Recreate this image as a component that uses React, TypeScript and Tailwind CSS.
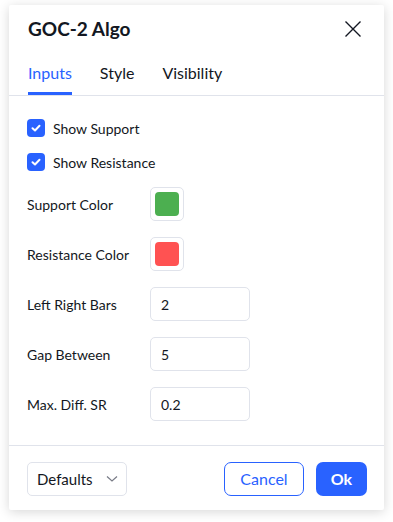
import React, { useState } from 'react';

const FONT = { fontFamily: 'Lato, "Noto Sans", sans-serif' };

const Checkbox = ({ checked, label, onToggle }: { checked: boolean; label: string; onToggle: () => void }) => (
    <label className="h-[34px] flex items-center gap-[8px] cursor-pointer" onClick={onToggle}>
        <span className={`w-[18px] h-[18px] rounded-[4px] flex items-center justify-center ${checked ? 'bg-[#2962ff]' : 'border border-[#b2b5be] bg-white'}`}>
            {checked && (
                <svg width="12" height="12" viewBox="0 0 12 12" fill="none">
                    <path d="M2.5 6.2 L5 8.5 L9.5 3.8" stroke="white" strokeWidth="2" strokeLinecap="round" strokeLinejoin="round" />
                </svg>
            )}
        </span>
        <span className="text-[14px] text-[#131722]">{label}</span>
    </label>
);

const Row = ({ label, children }: any) => (
    <div className="h-[34px] flex items-center">
        <div className="w-[123px] text-[14px] text-[#131722]">{label}</div>
        {children}
    </div>
);

const Swatch = ({ color }: { color: string }) => (
    <div className="w-[34px] h-[34px] border border-[#e0e3eb] rounded-[5px] flex items-center justify-center">
        <div className="w-[24px] h-[24px] rounded-[4px]" style={{ background: color }}></div>
    </div>
);

const NumInput = ({ value }: { value: string }) => (
    <input defaultValue={value} className="w-[100px] h-[34px] border border-[#e0e3eb] rounded-[5px] px-[10px] text-[14px] text-[#131722] outline-none" style={FONT} />
);

export default function App() {
    const [tab, setTab] = useState('inputs');
    const [support, setSupport] = useState(true);
    const [resist, setResist] = useState(true);

    const tabs = [
        { id: 'inputs', label: 'Inputs' },
        { id: 'style', label: 'Style' },
        { id: 'visibility', label: 'Visibility' },
    ];

    return (
        <div className="w-[393px] h-[522px] bg-white pt-[5px] pl-[9px]" style={FONT}>
            <div className="w-[375px] h-[505px] bg-white rounded-[2px] shadow-[0_2px_12px_rgba(0,0,0,0.16)] flex flex-col">
                {/* header */}
                <div className="h-[48px] flex items-center justify-between pl-[19px] pr-[22px]">
                    <h1 className="text-[19px] font-bold text-[#131722]">GOC-2 Algo</h1>
                    <button className="w-[18px] h-[18px] flex items-center justify-center">
                        <svg width="18" height="18" viewBox="0 0 18 18" fill="none">
                            <path d="M1.5 1.5 L16.5 16.5 M16.5 1.5 L1.5 16.5" stroke="#131722" strokeWidth="1.4" />
                        </svg>
                    </button>
                </div>

                {/* tabs */}
                <div className="h-[43px] flex gap-[28px] px-[19px] border-b border-[#e0e3eb]">
                    {tabs.map(t => (
                        <button
                            key={t.id}
                            onClick={() => setTab(t.id)}
                            className={`h-full flex items-center text-[16px] border-b-[3px] ${tab === t.id ? 'text-[#2962ff] border-[#2962ff]' : 'text-[#131722] border-transparent'}`}
                        >
                            {t.label}
                        </button>
                    ))}
                </div>

                {/* body */}
                <div className="flex-1 px-[18px] pt-[15px] flex flex-col">
                    <Checkbox checked={support} label="Show Support" onToggle={() => setSupport(!support)} />
                    <Checkbox checked={resist} label="Show Resistance" onToggle={() => setResist(!resist)} />
                    <div className="mt-[8px] flex flex-col gap-[16px]">
                        <Row label="Support Color"><Swatch color="#4caf50" /></Row>
                        <Row label="Resistance Color"><Swatch color="#ff5252" /></Row>
                        <Row label="Left Right Bars"><NumInput value="2" /></Row>
                        <Row label="Gap Between"><NumInput value="5" /></Row>
                        <Row label="Max. Diff. SR"><NumInput value="0.2" /></Row>
                    </div>
                </div>

                {/* footer */}
                <div className="border-t border-[#e0e3eb] pt-[16px] pb-[14px] pl-[18px] pr-[17px] flex items-center">
                    <button className="w-[100px] h-[34px] border border-[#e0e3eb] rounded-[5px] pl-[9px] pr-[8px] flex items-center justify-between text-[15px] text-[#131722]">
                        Defaults
                        <svg width="12" height="8" viewBox="0 0 12 8" fill="none">
                            <path d="M1 1.5 L6 6 L11 1.5" stroke="#787b86" strokeWidth="1.2" />
                        </svg>
                    </button>
                    <div className="ml-auto flex gap-[12px]">
                        <button className="w-[80px] h-[34px] border border-[#2962ff] rounded-[7px] text-[#2962ff] text-[16px]">Cancel</button>
                        <button className="w-[51px] h-[34px] bg-[#2962ff] rounded-[7px] text-white text-[16px] font-bold">Ok</button>
                    </div>
                </div>
            </div>
        </div>
    );
}
